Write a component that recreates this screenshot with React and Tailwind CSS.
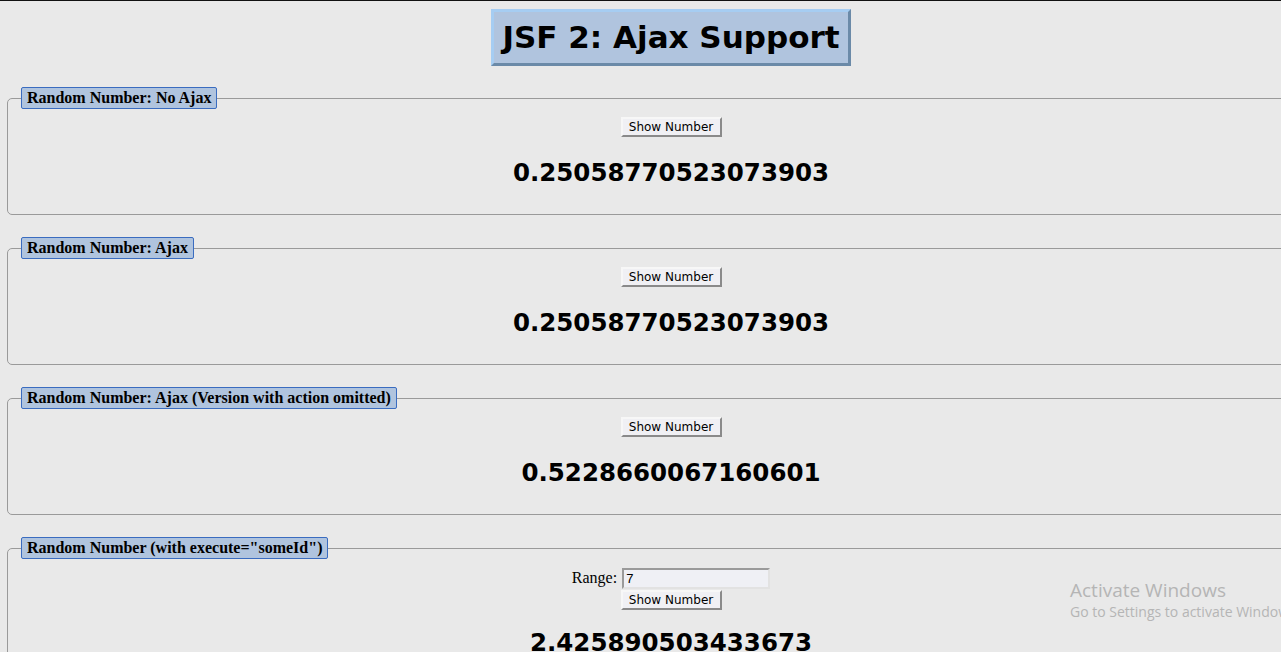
import React from "react";

const verdana = { fontFamily: '"DejaVu Sans", Verdana, sans-serif' };

function Btn() {
  return (
    <button
      className="h-[20px] w-[101px] bg-[#f0f0f4] text-[12px] leading-none text-black border-2 border-t-[#f7f7f7] border-l-[#f7f7f7] border-b-[#8a8a8a] border-r-[#8a8a8a] font-['DejaVu_Sans',sans-serif]"
    >
      Show Number
    </button>
  );
}

function Box({ title, children, last }) {
  return (
    <fieldset
      className={
        "ml-[7px] w-[1328px] border border-[#9a9a9a] rounded-[5px] " +
        (last ? "" : "mb-[22px]")
      }
    >
      <legend className="ml-[13px] px-[5px] h-[22px] leading-[20px] bg-[#b0c4de] border border-[#3a6cc0] rounded-[2px] font-['Liberation_Serif',serif] font-bold text-[16px] text-black">
        {title}
      </legend>
      {children}
    </fieldset>
  );
}

function Num({ value }) {
  return (
    <div
      className="text-center font-bold text-[24.5px] leading-[28px] text-black"
      style={verdana}
    >
      {value}
    </div>
  );
}

export default function App() {
  return (
    <div className="relative w-[1281px] h-[652px] overflow-hidden bg-[#e9e9e9] border-t border-[#111]">
      <div className="w-[1342px]">
        <div className="flex justify-center pt-[8px]">
          <div
            className="h-[57px] w-[360px] flex items-center justify-center bg-[#b0c4de] border-[3px] border-t-[#a6cdf2] border-l-[#a6cdf2] border-b-[#6b8aa8] border-r-[#6b8aa8] text-[31px] font-bold text-black"
            style={verdana}
          >
            JSF 2: Ajax Support
          </div>
        </div>
        <div className="mt-[21px]">
          <Box title="Random Number: No Ajax">
            <div className="flex justify-center mt-[8px]">
              <Btn />
            </div>
            <div className="mt-[22px] h-[55px]">
              <Num value="0.25058770523073903" />
            </div>
          </Box>
          <Box title="Random Number: Ajax">
            <div className="flex justify-center mt-[8px]">
              <Btn />
            </div>
            <div className="mt-[22px] h-[55px]">
              <Num value="0.25058770523073903" />
            </div>
          </Box>
          <Box title="Random Number: Ajax (Version with action omitted)">
            <div className="flex justify-center mt-[8px]">
              <Btn />
            </div>
            <div className="mt-[22px] h-[55px]">
              <Num value="0.5228660067160601" />
            </div>
          </Box>
          <Box title='Random Number (with execute="someId")' last>
            <div className="flex justify-center items-center mt-[7px]">
              <span className="font-['Liberation_Serif',serif] text-[16px] text-black mr-[5px]">
                Range:
              </span>
              <input
                defaultValue="7"
                className="w-[148px] h-[21px] bg-[#eff0f5] border-2 border-t-[#9a9a9a] border-l-[#9a9a9a] border-b-[#e2e2e2] border-r-[#e2e2e2] px-[2px] text-[13px] font-['Liberation_Sans',sans-serif] text-black outline-none"
              />
            </div>
            <div className="flex justify-center">
              <Btn />
            </div>
            <div className="mt-[19px] h-[57px]">
              <Num value="2.425890503433673" />
            </div>
          </Box>
        </div>
      </div>
      <div className="absolute left-[1070px] top-[577px] text-[#b5b5b5] font-['Open_Sans',sans-serif] pointer-events-none">
        <div className="text-[19px] leading-[24px]">Activate Windows</div>
        <div className="text-[14px] leading-[20px] whitespace-nowrap">
          Go to Settings to activate Windows.
        </div>
      </div>
    </div>
  );
}
